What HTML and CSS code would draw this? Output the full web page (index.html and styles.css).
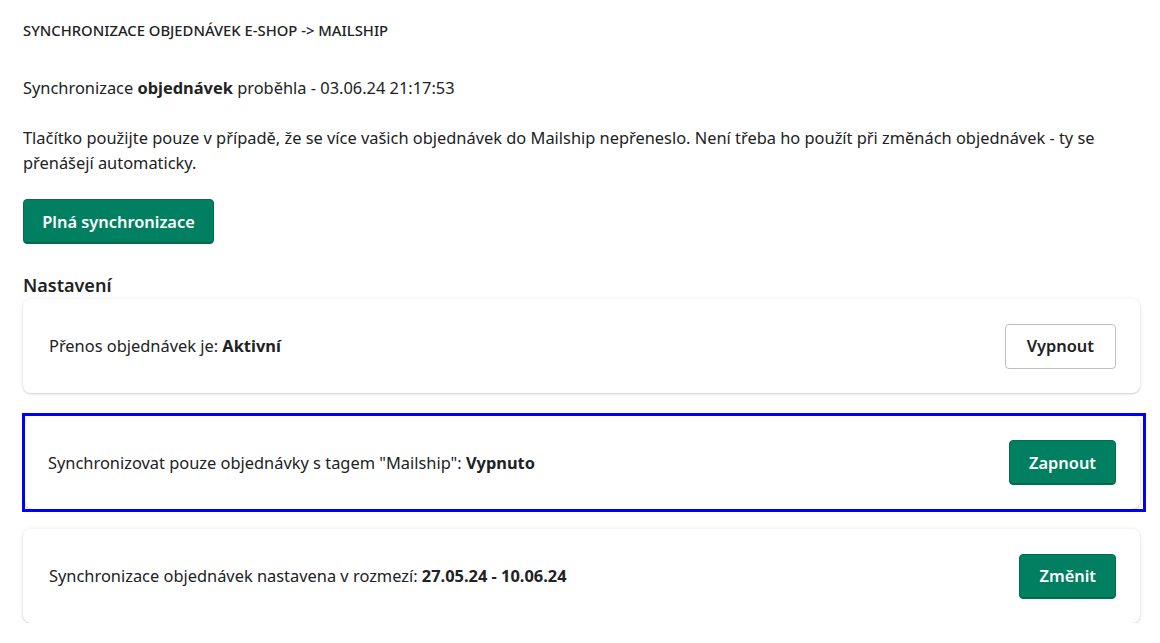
FILE: index.html
```html
<!DOCTYPE html>
<html lang="cs">
<head>
<meta charset="utf-8">
<title>Synchronizace objednávek</title>
<link rel="stylesheet" href="styles.css">
</head>
<body>
<main class="page">
  <h1 class="title">SYNCHRONIZACE OBJEDNÁVEK E-SHOP -&gt; MAILSHIP</h1>
  <p class="status">Synchronizace <strong>objednávek</strong> proběhla - 03.06.24 21:17:53</p>
  <p class="info">Tlačítko použijte pouze v případě, že se více vašich objednávek do Mailship nepřeneslo. Není třeba ho použít při změnách objednávek - ty se přenášejí automaticky.</p>
  <div class="actions">
    <button class="btn btn-primary btn-full">Plná synchronizace</button>
  </div>
  <h2 class="section">Nastavení</h2>
  <div class="cards">
    <div class="card">
      <span class="card-text">Přenos objednávek je: <strong>Aktivní</strong></span>
      <button class="btn btn-secondary">Vypnout</button>
    </div>
    <div class="highlight">
      <div class="card card-inner">
        <span class="card-text">Synchronizovat pouze objednávky s tagem "Mailship": <strong>Vypnuto</strong></span>
        <button class="btn btn-primary">Zapnout</button>
      </div>
    </div>
    <div class="card">
      <span class="card-text">Synchronizace objednávek nastavena v rozmezí: <strong>27.05.24 - 10.06.24</strong></span>
      <button class="btn btn-primary">Změnit</button>
    </div>
  </div>
</main>
</body>
</html>
```

FILE: styles.css
```css
* { box-sizing: border-box; }
html, body { margin: 0; padding: 0; background: #ffffff; }
body {
  font-family: "Noto Sans", "Open Sans", sans-serif;
  color: #202223;
  font-size: 16.4px;
}
.page {
  padding: 20px 20px 0 23px;
  width: 1160px;
}
.title {
  margin: 0;
  font-size: 14.8px;
  font-weight: 500;
  line-height: 20px;
  letter-spacing: 0;
}
.status {
  margin: 36px 0 0;
  line-height: 24px;
}
.info {
  margin: 25px 0 0;
  line-height: 25px;
  max-width: 1115px;
}
.actions { margin-top: 24px; }
.btn {
  font-family: inherit;
  font-size: 16.4px;
  font-weight: 600;
  line-height: 20px;
  border-radius: 4px;
  cursor: pointer;
  height: 45px;
  padding: 0 19px;
}
.btn-primary {
  background: #008060;
  border: 1px solid #006e52;
  color: #fff;
  box-shadow: inset 0 -1px 0 rgba(0,0,0,0.2);
}
.btn-secondary {
  background: #fff;
  border: 1px solid #babfc3;
  color: #202223;
  padding: 0 21px;
}
.btn-full { width: 191px; padding: 0; }
.section {
  margin: 29px 0 2px;
  font-size: 18px;
  font-weight: 600;
  line-height: 24px;
}
.cards {
  display: flex;
  flex-direction: column;
  width: 1117px;
}
.card {
  display: flex;
  align-items: center;
  justify-content: space-between;
  background: #fff;
  border-radius: 8px;
  box-shadow: 0 0 5px rgba(23,24,24,0.08), 0 1px 2px rgba(0,0,0,0.15);
  padding: 0 24px 0 26px;
  height: 94px;
}
.highlight {
  border: 3px solid #0000ff;
  width: 1124px;
  margin: 20px 0 17px -1px;
}
.card-inner {
  height: 93px;
  width: 1115px;
  padding-left: 23px;
}
.card-text { line-height: 24px; }
.card-text strong { font-weight: 700; }
```
